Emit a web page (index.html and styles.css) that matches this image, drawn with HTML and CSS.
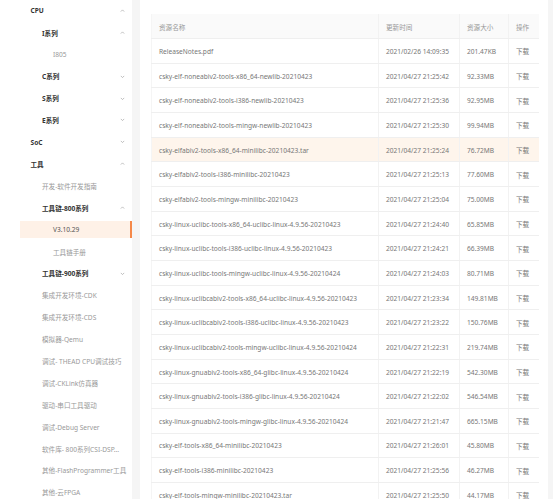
FILE: index.html
```html
<!DOCTYPE html>
<html lang="zh-CN">
<head>
<meta charset="utf-8">
<title>资源下载</title>
<link rel="stylesheet" href="styles.css">
</head>
<body>
<div class="layout">
  <aside class="sidebar">
    <ul class="menu">
      <li class="item l1 group"><span>CPU</span><svg class="chev" viewBox="0 0 6 4"><polyline points="1,3 3,1 5,3"/></svg></li>
      <li class="item l2 group"><span>I系列</span><svg class="chev" viewBox="0 0 6 4"><polyline points="1,3 3,1 5,3"/></svg></li>
      <li class="item l3"><span>I805</span></li>
      <li class="item l2 group"><span>C系列</span><svg class="chev" viewBox="0 0 6 4"><polyline points="1,1 3,3 5,1"/></svg></li>
      <li class="item l2 group"><span>S系列</span><svg class="chev" viewBox="0 0 6 4"><polyline points="1,1 3,3 5,1"/></svg></li>
      <li class="item l2 group"><span>E系列</span><svg class="chev" viewBox="0 0 6 4"><polyline points="1,1 3,3 5,1"/></svg></li>
      <li class="item l1 group"><span>SoC</span><svg class="chev" viewBox="0 0 6 4"><polyline points="1,1 3,3 5,1"/></svg></li>
      <li class="item l1 group"><span>工具</span><svg class="chev" viewBox="0 0 6 4"><polyline points="1,3 3,1 5,3"/></svg></li>
      <li class="item l2"><span>开发-软件开发指南</span></li>
      <li class="item l2 group"><span>工具链-800系列</span><svg class="chev" viewBox="0 0 6 4"><polyline points="1,3 3,1 5,3"/></svg></li>
      <li class="item l3 active"><span>V3.10.29</span></li>
      <li class="item l3"><span>工具链手册</span></li>
      <li class="item l2 group"><span>工具链-900系列</span><svg class="chev" viewBox="0 0 6 4"><polyline points="1,1 3,3 5,1"/></svg></li>
      <li class="item l2"><span>集成开发环境-CDK</span></li>
      <li class="item l2"><span>集成开发环境-CDS</span></li>
      <li class="item l2"><span>模拟器-Qemu</span></li>
      <li class="item l2"><span>调试- THEAD CPU调试技巧</span></li>
      <li class="item l2"><span>调试-CKLink仿真器</span></li>
      <li class="item l2"><span>驱动-串口工具驱动</span></li>
      <li class="item l2"><span>调试-Debug Server</span></li>
      <li class="item l2"><span>软件库- 800系列CSI-DSP...</span></li>
      <li class="item l2"><span>其他-FlashProgrammer工具</span></li>
      <li class="item l2"><span>其他-云FPGA</span></li>
    </ul>
  </aside>
  <main class="content">
    <div class="card">
      <table class="files">
        <colgroup>
          <col class="c-name"><col class="c-time"><col class="c-size"><col class="c-op">
        </colgroup>
        <thead>
          <tr><th>资源名称</th><th>更新时间</th><th>资源大小</th><th>操作</th></tr>
        </thead>
        <tbody>
          <tr><td>ReleaseNotes.pdf</td><td>2021/02/26 14:09:35</td><td>201.47KB</td><td>下载</td></tr>
          <tr><td>csky-elf-noneabiv2-tools-x86_64-newlib-20210423</td><td>2021/04/27 21:25:42</td><td>92.33MB</td><td>下载</td></tr>
          <tr><td>csky-elf-noneabiv2-tools-i386-newlib-20210423</td><td>2021/04/27 21:25:36</td><td>92.95MB</td><td>下载</td></tr>
          <tr><td>csky-elf-noneabiv2-tools-mingw-newlib-20210423</td><td>2021/04/27 21:25:30</td><td>99.94MB</td><td>下载</td></tr>
          <tr class="hover"><td>csky-elfabiv2-tools-x86_64-minilibc-20210423.tar</td><td>2021/04/27 21:25:24</td><td>76.72MB</td><td>下载</td></tr>
          <tr><td>csky-elfabiv2-tools-i386-minilibc-20210423</td><td>2021/04/27 21:25:13</td><td>77.60MB</td><td>下载</td></tr>
          <tr><td>csky-elfabiv2-tools-mingw-minilibc-20210423</td><td>2021/04/27 21:25:04</td><td>75.00MB</td><td>下载</td></tr>
          <tr><td>csky-linux-uclibc-tools-x86_64-uclibc-linux-4.9.56-20210423</td><td>2021/04/27 21:24:40</td><td>65.85MB</td><td>下载</td></tr>
          <tr><td>csky-linux-uclibc-tools-i386-uclibc-linux-4.9.56-20210423</td><td>2021/04/27 21:24:21</td><td>66.39MB</td><td>下载</td></tr>
          <tr><td>csky-linux-uclibc-tools-mingw-uclibc-linux-4.9.56-20210424</td><td>2021/04/27 21:24:03</td><td>80.71MB</td><td>下载</td></tr>
          <tr><td>csky-linux-uclibcabiv2-tools-x86_64-uclibc-linux-4.9.56-20210423</td><td>2021/04/27 21:23:34</td><td>149.81MB</td><td>下载</td></tr>
          <tr><td>csky-linux-uclibcabiv2-tools-i386-uclibc-linux-4.9.56-20210423</td><td>2021/04/27 21:23:22</td><td>150.76MB</td><td>下载</td></tr>
          <tr><td>csky-linux-uclibcabiv2-tools-mingw-uclibc-linux-4.9.56-20210424</td><td>2021/04/27 21:22:31</td><td>219.74MB</td><td>下载</td></tr>
          <tr><td>csky-linux-gnuabiv2-tools-x86_64-glibc-linux-4.9.56-20210424</td><td>2021/04/27 21:22:19</td><td>542.30MB</td><td>下载</td></tr>
          <tr><td>csky-linux-gnuabiv2-tools-i386-glibc-linux-4.9.56-20210424</td><td>2021/04/27 21:22:02</td><td>546.54MB</td><td>下载</td></tr>
          <tr><td>csky-linux-gnuabiv2-tools-mingw-glibc-linux-4.9.56-20210424</td><td>2021/04/27 21:21:47</td><td>665.15MB</td><td>下载</td></tr>
          <tr><td>csky-elf-tools-x86_64-minilibc-20210423</td><td>2021/04/27 21:26:01</td><td>45.80MB</td><td>下载</td></tr>
          <tr><td>csky-elf-tools-i386-minilibc-20210423</td><td>2021/04/27 21:25:56</td><td>46.27MB</td><td>下载</td></tr>
          <tr><td>csky-elf-tools-mingw-minilibc-20210423.tar</td><td>2021/04/27 21:25:50</td><td>44.17MB</td><td>下载</td></tr>
        </tbody>
      </table>
    </div>
  </main>
</div>
</body>
</html>
```
FILE: styles.css
```css
html, body {
  margin: 0;
  padding: 0;
  height: 100%;
  overflow: hidden;
}
body {
  font-family: "Noto Sans", "Noto Sans CJK SC", sans-serif;
  font-size: 6.6px;
  color: #777;
  background: #f5f5f5;
}
.layout {
  display: flex;
  height: 100%;
}
.sidebar {
  width: 132px;
  flex: none;
  background: #fff;
  overflow: hidden;
}
.menu {
  list-style: none;
  margin: 0;
  padding: 2px 0 0;
  display: flex;
  flex-direction: column;
  gap: 4.4px;
}
.item {
  display: flex;
  flex: none;
  align-items: center;
  height: 17.5px;
  margin-left: 20px;
  padding-right: 7px;
  color: #999;
  white-space: nowrap;
}
.item.group {
  color: #333;
  font-weight: 700;
}
.l1 { padding-left: 10.5px; }
.l2 { padding-left: 22px; }
.l3 { padding-left: 33px; }
.item.active {
  background: #fef1e7;
  color: #555;
  box-shadow: inset -2px 0 0 #f5894a;
}
.chev {
  width: 5px;
  height: 3.5px;
  margin-left: auto;
  fill: none;
  stroke: #aaa;
  stroke-width: 0.9;
}
.content {
  flex: 1;
  padding: 0 5px 0 8px;
  min-width: 0;
}
.card {
  background: #fff;
  height: 100%;
  padding: 14px 10px 0 11px;
  box-sizing: border-box;
}
.files {
  width: 387px;
  border-collapse: collapse;
  table-layout: fixed;
}
.c-name { width: 227px; }
.c-time { width: 81px; }
.c-size { width: 49px; }
.c-op { width: 30px; }
.files th, .files td {
  height: 24.67px;
  padding: 1px 0 0 7px;
  box-sizing: border-box;
  text-align: left;
  font-weight: 400;
  white-space: nowrap;
  overflow: hidden;
  border-bottom: 1px solid #efefef;
  border-left: 1px solid #f2f2f2;
}
.files th {
  background: #fafafa;
  color: #999;
}
.files td:first-child, .files th:first-child {
  border-left: 1px solid #f5f5f5;
}
.files tr.hover td {
  background: #fef5ec;
}
```
